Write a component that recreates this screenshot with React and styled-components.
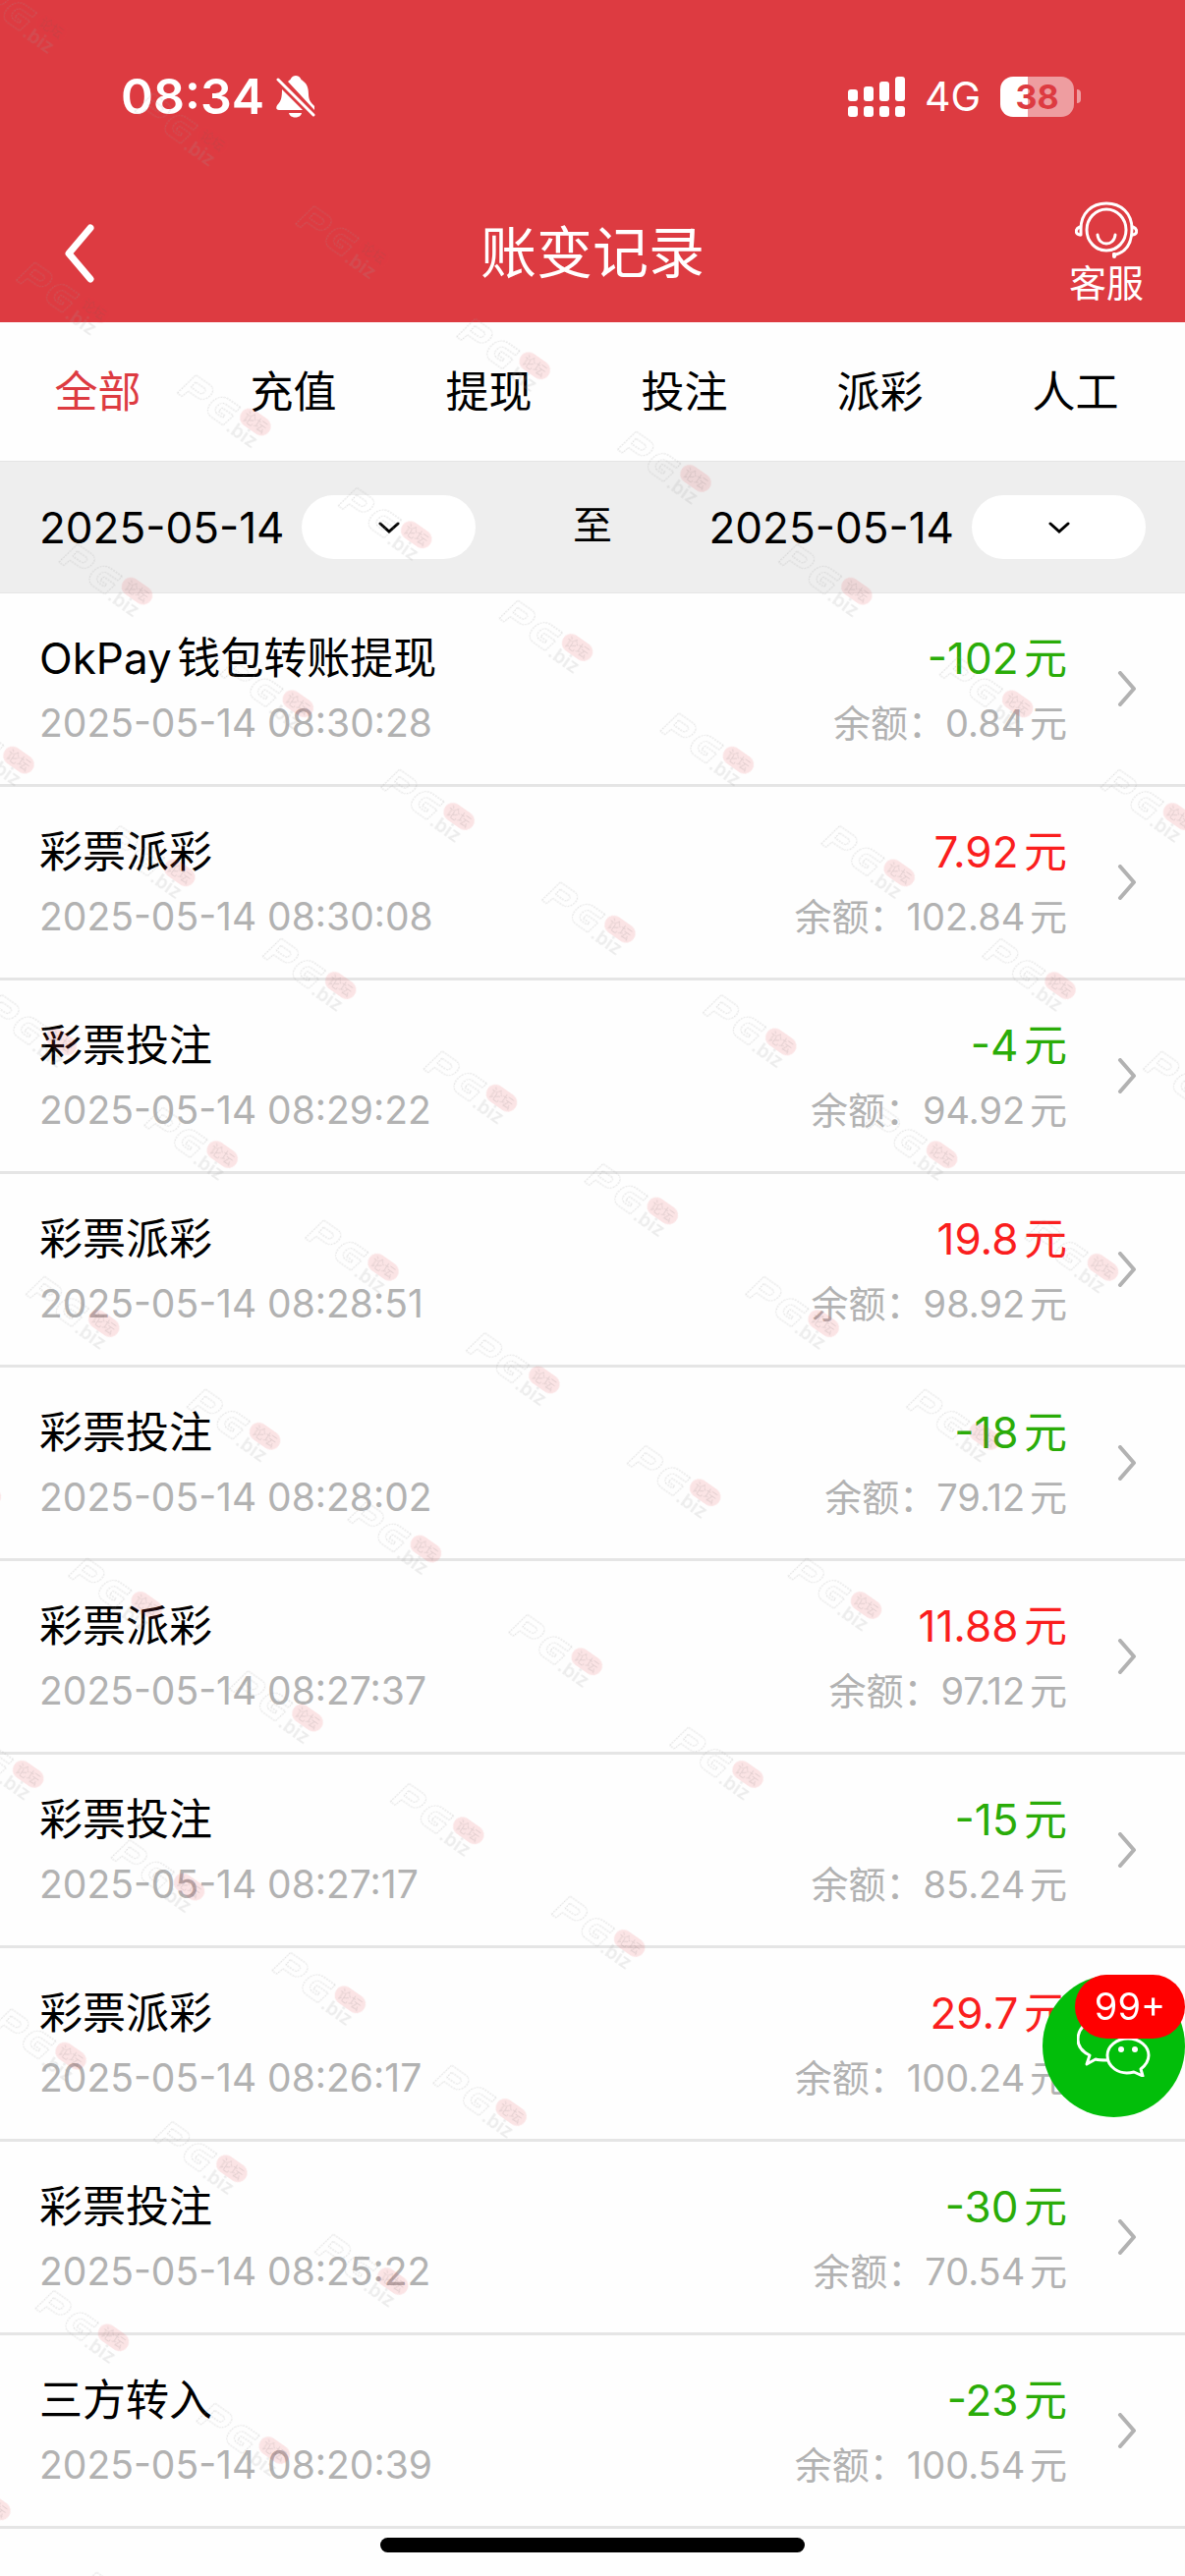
import React, { useState } from 'react';
import styled, { createGlobalStyle } from 'styled-components';

const records = [
  { id: 1, title: 'OkPay钱包转账提现', time: '2025-05-14 08:30:28', amount: '-102', balance: '0.84' },
  { id: 2, title: '彩票派彩', time: '2025-05-14 08:30:08', amount: '7.92', balance: '102.84' },
  { id: 3, title: '彩票投注', time: '2025-05-14 08:29:22', amount: '-4', balance: '94.92' },
  { id: 4, title: '彩票派彩', time: '2025-05-14 08:28:51', amount: '19.8', balance: '98.92' },
  { id: 5, title: '彩票投注', time: '2025-05-14 08:28:02', amount: '-18', balance: '79.12' },
  { id: 6, title: '彩票派彩', time: '2025-05-14 08:27:37', amount: '11.88', balance: '97.12' },
  { id: 7, title: '彩票投注', time: '2025-05-14 08:27:17', amount: '-15', balance: '85.24' },
  { id: 8, title: '彩票派彩', time: '2025-05-14 08:26:17', amount: '29.7', balance: '100.24' },
  { id: 9, title: '彩票投注', time: '2025-05-14 08:25:22', amount: '-30', balance: '70.54' },
  { id: 10, title: '三方转入', time: '2025-05-14 08:20:39', amount: '-23', balance: '100.54' },
];

const tabs = ['全部', '充值', '提现', '投注', '派彩', '人工'];

const dates = ['2025-05-14', '2025-05-13', '2025-05-12'];

const GlobalStyle = createGlobalStyle`
  :root {
    --theme: #dd3b41;
    --income: #fa1e1e;
    --outcome: #2aac08;
    --muted: #b2b2b2;
    --line: #e5e5e5;
  }

  * {
    box-sizing: border-box;
  }

  body {
    margin: 0;
    background-color: #fefefe;
    color: #000;
    font-family: Inter, 'Noto Sans CJK SC', sans-serif;
    text-autospace: normal;
  }

  button, select {
    margin: 0;
    padding: 0;
    border: none;
    background: none;
    color: inherit;
    font: inherit;
    cursor: pointer;
  }

  ul {
    margin: 0;
    padding: 0;
    list-style: none;
  }

  svg {
    display: block;
  }
`

const Page = styled.div`
  position: relative;
  min-height: 100vh;
  overflow: hidden;
`

const Header = styled.header`
  background-color: var(--theme);
  color: white;
`

const StatusBar = styled.div`
  display: flex;
  justify-content: space-between;
  align-items: center;
  height: 196px;
  padding: 0 106px 0 123px;
`

const StatusGroup = styled.div`
  display: flex;
  align-items: center;
  gap: ${ props => props.$gap };
`

const Clock = styled.span`
  font-size: 50px;
  font-weight: 600;
`

const Network = styled.span`
  font-size: 41px;
  font-weight: 400;
`

const Battery = styled.div`
  display: flex;
  align-items: center;
  gap: 3px;

  &::after {
    content: '';
    width: 4px;
    height: 14px;
    border-radius: 0 7px 7px 0;
    background-color: rgba(255, 255, 255, 0.5);
  }
`

const BatteryLevel = styled.span`
  width: 75px;
  height: 41px;
  border-radius: 13px;
  background: linear-gradient(to right, white 38%, rgba(255, 255, 255, 0.5) 38%);
  color: var(--theme);
  font-size: 34px;
  font-weight: 700;
  line-height: 41px;
  text-align: center;
`

const NavBar = styled.div`
  display: grid;
  grid-template-columns: 160px 1fr 160px;
  align-items: center;
  height: 132px;
  padding-bottom: 9px;
`

const BackButton = styled.button`
  justify-self: start;
  padding: 0 64px;
`

const Title = styled.h1`
  margin: 0;
  font-size: 57px;
  font-weight: 400;
  line-height: 80px;
  text-align: center;
`

const ServiceButton = styled.button`
  display: flex;
  flex-direction: column;
  align-items: center;
  justify-self: center;
  padding-top: 3px;
  font-size: 38px;
  line-height: 50px;
`

const TabBar = styled.nav`
  display: grid;
  grid-template-columns: repeat(6, 1fr);
  height: 142px;
  padding: 0 12px 5px 0;
  border-bottom: 1px solid var(--line);
`

const Tab = styled.button`
  color: ${ props => props.$active ? 'var(--theme)' : 'inherit' };
  font-size: 44px;
`

const FilterBar = styled.div`
  display: flex;
  justify-content: space-between;
  align-items: center;
  height: 134px;
  padding: 0 40px;
  border-bottom: 1px solid var(--line);
  background-color: #eee;
  font-size: 44px;
`

const FilterText = styled.span`
  padding-bottom: 9px;
  font-size: 40px;
`

const DateField = styled.div`
  display: flex;
  align-items: center;
  gap: 18px;
`

const SelectWrapper = styled.div`
  position: relative;

  svg {
    position: absolute;
    inset: 0;
    margin: auto;
    pointer-events: none;
  }
`

const Select = styled.select`
  display: block;
  width: 177px;
  height: 65px;
  border-radius: 33px;
  background-color: white;
  appearance: none;
`

const Row = styled.li`
  border-bottom: 3px solid var(--line);
`

const RowLink = styled.a`
  display: flex;
  align-items: center;
  height: 194px;
  padding: 0 49px 0 40px;
  color: inherit;
  text-decoration: none;
`

const RowText = styled.div`
  flex: ${ props => props.$grow ? 1 : 'none' };
  padding-top: 4px;
  line-height: 66px;
  text-align: ${ props => props.$grow ? 'left' : 'right' };
`

const RowTitle = styled.div`
  font-size: 44px;
  color: ${ props => props.$color || 'inherit' };
`

const RowBalance = styled.div`
  color: var(--muted);
  font-size: 38px;
`

const RowTime = styled.time`
  display: block;
  color: var(--muted);
  font-size: 39px;
`

const RowArrow = styled.span`
  margin-left: 51px;
`

const ChatButton = styled.button`
  position: fixed;
  right: 0;
  bottom: 467px;
  width: 145px;
  height: 145px;
  border-radius: 50%;
  background-color: #02be0a;

  svg {
    margin: 0 auto;
  }
`

const Badge = styled.span`
  position: absolute;
  top: 0;
  right: 0;
  width: 112px;
  border-radius: 33px;
  background-color: #f00;
  color: white;
  font-size: 38px;
  line-height: 65px;
  text-align: center;
`

const HomeIndicator = styled.div`
  position: fixed;
  bottom: 24px;
  left: 50%;
  width: 432px;
  height: 15px;
  border-radius: 8px;
  background-color: #000;
  transform: translateX(-50%);
`

const WatermarkLayer = styled.svg`
  position: absolute;
  inset: 0;
  width: 100%;
  height: 100%;
  pointer-events: none;
`

// the tiled sheet is turned as a whole, its top right corner stays empty
function Watermark() {
  return (
    <WatermarkLayer aria-hidden='true'>
      <defs>
        <pattern id='mark' width='200' height='210' patternUnits='userSpaceOnUse'>
          <g transform='translate(50 100)' fontFamily='Inter, sans-serif'>
            <g fill='none' stroke='#999' strokeOpacity='0.3' strokeWidth='1' strokeDasharray='2 1'>
              <path d='M0 0 5 -26H22Q30 -26 29 -17 27 -8 19 -8H8L6 0ZM9 -20 8 -13H18Q22 -13 22 -17 23 -20 19 -20Z' />
              <path d='M61 -25H46Q36 -24 34 -12 33 0 43 0H57L60 -14H46L45 -9H53L52 -6H45Q40 -7 41 -13 42 -19 47 -19H60Z' />
            </g>
            <text x='61' y='3' fontSize='19' fontWeight='600' fill='#999' fillOpacity='0.18'>.biz</text>
            <rect x='65' y='-31' width='34' height='19' rx='9' fill='#e8323c' fillOpacity='0.13' />
            <text x='69' y='-17' fontSize='13' fontFamily='Noto Sans CJK SC, sans-serif' fill='#555' fillOpacity='0.14'>论坛</text>
          </g>
        </pattern>
      </defs>
      <g transform='translate(404 691) rotate(35)'>
        <rect x='-2000' y='-420' width='3000' height='4200' fill='url(#mark)' />
      </g>
    </WatermarkLayer>
  )
}

function MuteIcon() {
  return (
    <svg width='40' height='43' viewBox='0 0 40 43' fill='white'>
      <path d='M12 6C14 4 15 4 15 3 17 -1 23 -1 25 3 25 4 26 4 28 6 32 9 33 14 33 19 33 25 36 28 39 31V35Z' />
      <path d='M6 14 27 35H3C-1 35 0 31 2 29 5 26 6 22 6 14Z' />
      <path d='M13 38H26C25 44 14 44 13 38Z' />
      <path d='M2 4 38 40' stroke='white' strokeWidth='3' strokeLinecap='round' />
    </svg>
  )
}

function SignalIcon() {
  return (
    <svg width='58' height='41' viewBox='0 0 58 41' fill='white'>
      <rect x='0' y='13' width='10' height='12' rx='3' />
      <rect x='16' y='10' width='10' height='15' rx='3' />
      <rect x='32' y='5' width='10' height='20' rx='3' />
      <rect x='48' y='0' width='10' height='25' rx='3' />
      <rect x='0' y='30' width='10' height='11' rx='3' />
      <rect x='16' y='30' width='10' height='11' rx='3' />
      <rect x='32' y='30' width='10' height='11' rx='3' />
      <rect x='48' y='30' width='10' height='11' rx='3' />
    </svg>
  )
}

function ServiceIcon() {
  return (
    <svg width='64' height='58' viewBox='0 0 64 58' fill='none' stroke='white' strokeWidth='3' strokeLinecap='round'>
      <ellipse cx='32' cy='29' rx='20' ry='21' />
      <path d='M6 34V28C6 12 17 2 32 2S58 12 58 28C58 42 52 51 42 54' />
      <path d='M5 26C0 28 0 33 5 34M59 26C64 28 64 33 59 34' />
      <path d='M23 34C24 46 40 46 41 34' />
      <circle cx='40' cy='54' r='2' fill='white' stroke='none' />
      <path d='M40 54V56' strokeWidth='4' />
    </svg>
  )
}

function ChatIcon() {
  return (
    <svg width='75' height='62' viewBox='0 0 75 62' fill='none' stroke='white' strokeWidth='3' strokeLinejoin='round'>
      <path d='M31 45C27 45 22 45 19 44L10 49 13 40C5 36 1 30 1 24 1 11 13 2 28 2 42 2 53 11 54 22' />
      <path d='M52 23C64 23 73 31 73 40 73 46 70 50 65 54L67 61 58 57C42 61 31 51 31 40 31 31 40 23 52 23Z' />
      <g fill='white' stroke='none'>
        <circle cx='45' cy='34' r='3' />
        <circle cx='59' cy='34' r='3' />
      </g>
    </svg>
  )
}

function DatePicker({ id, value, onChange }) {
  return (
    <DateField>
      <label htmlFor={ id }>{ value }</label>
      <SelectWrapper>
        <Select id={ id } value='' onChange={ e => onChange(e.target.value) }>
          <option value=''></option>
          { dates.map(date => <option key={ date } value={ date }>{ date }</option>) }
        </Select>
        <svg width='22' height='12' viewBox='0 0 22 12' fill='none' stroke='black' strokeWidth='3' strokeLinecap='round'>
          <path d='M2 2 11 10 20 2' />
        </svg>
      </SelectWrapper>
    </DateField>
  )
}

function Record({ record }) {
  const color = record.amount.startsWith('-') ? 'var(--outcome)' : 'var(--income)';

  return (
    <Row>
      <RowLink href={ '#record-' + record.id }>
        <RowText $grow>
          <RowTitle>{ record.title }</RowTitle>
          <RowTime>{ record.time }</RowTime>
        </RowText>
        <RowText>
          <RowTitle $color={ color }>{ `${ record.amount }元` }</RowTitle>
          <RowBalance>{ `余额：${ record.balance }元` }</RowBalance>
        </RowText>
        <RowArrow>
          <svg width='20' height='36' viewBox='0 0 20 36' fill='none' stroke='#b2b2b2' strokeWidth='4' strokeLinecap='round' strokeLinejoin='round'>
            <path d='M3 2 17 18 3 34' />
          </svg>
        </RowArrow>
      </RowLink>
    </Row>
  )
}

export default function App() {
  const [active, setActive] = useState('全部');
  const [start, setStart] = useState('2025-05-14');
  const [end, setEnd] = useState('2025-05-14');

  return (
    <Page>
      <GlobalStyle />
      <Header>
        <StatusBar>
          <StatusGroup $gap='12px'>
            <Clock>08:34</Clock>
            <MuteIcon />
          </StatusGroup>
          <StatusGroup $gap='20px'>
            <SignalIcon />
            <Network>4G</Network>
            <Battery>
              <BatteryLevel>38</BatteryLevel>
            </Battery>
          </StatusGroup>
        </StatusBar>
        <NavBar>
          <BackButton aria-label='返回'>
            <svg width='32' height='60' viewBox='0 0 32 60' fill='none' stroke='white' strokeWidth='7' strokeLinecap='round' strokeLinejoin='round'>
              <path d='M28 4 6 30 28 56' />
            </svg>
          </BackButton>
          <Title>账变记录</Title>
          <ServiceButton>
            <ServiceIcon />
            客服
          </ServiceButton>
        </NavBar>
      </Header>
      <TabBar>
        { tabs.map(tab => (
          <Tab key={ tab } $active={ tab === active } onClick={ () => setActive(tab) }>{ tab }</Tab>
        )) }
      </TabBar>
      <FilterBar>
        <DatePicker id='start' value={ start } onChange={ setStart } />
        <FilterText>至</FilterText>
        <DatePicker id='end' value={ end } onChange={ setEnd } />
      </FilterBar>
      <ul>
        { records.map(record => <Record key={ record.id } record={ record } />) }
      </ul>
      <Watermark />
      <ChatButton aria-label='在线客服'>
        <ChatIcon />
        <Badge>99+</Badge>
      </ChatButton>
      <HomeIndicator />
    </Page>
  )
}
